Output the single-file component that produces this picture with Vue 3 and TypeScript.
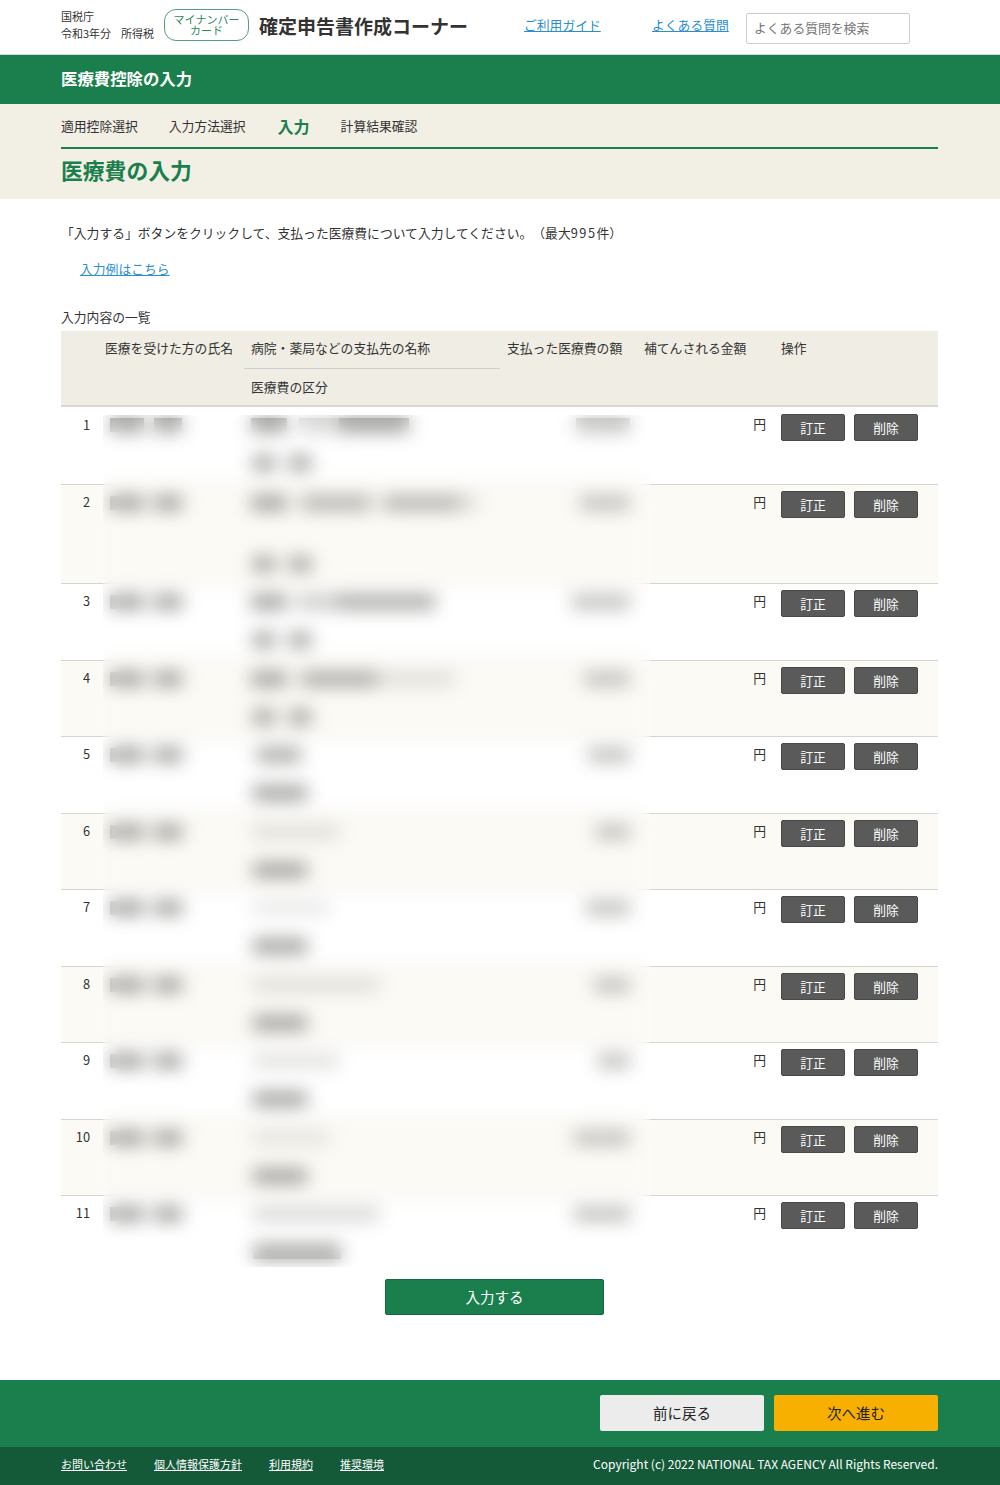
<template>
  <div class="page">
    <header class="top">
      <div class="wrap top-inner">
        <div class="year">
          <div>国税庁</div>
          <div>令和3年分<span class="tax">所得税</span></div>
        </div>
        <div class="badge">マイナンバー<br />カード</div>
        <div class="corner">確定申告書作成コーナー</div>
        <a class="guide">ご利用ガイド</a>
        <a class="faq">よくある質問</a>
        <input class="search" placeholder="よくある質問を検索" />
      </div>
    </header>

    <div class="band"><div class="wrap">医療費控除の入力</div></div>

    <div class="steps">
      <div class="wrap">
        <nav class="step-list">
          <span v-for="s in steps" :key="s" class="step" :class="{ active: s === '入力' }">{{ s }}</span>
        </nav>
        <h1 class="title">医療費の入力</h1>
      </div>
    </div>

    <main class="wrap main">
      <p class="lead">「入力する」ボタンをクリックして、支払った医療費について入力してください。（最大<span class="num">995</span>件）</p>
      <a class="example">入力例はこちら</a>
      <div class="list-label">入力内容の一覧</div>

      <div class="table">
        <div class="thead">
          <div></div>
          <div class="th">医療を受けた方の氏名</div>
          <div class="th-stack">
            <div class="th th-split">病院・薬局などの支払先の名称</div>
            <div class="th">医療費の区分</div>
          </div>
          <div class="th">支払った医療費の額</div>
          <div class="th">補てんされる金額</div>
          <div class="th">操作</div>
        </div>

        <div class="tbody">
          <div
            v-for="(r, i) in rows"
            :key="i"
            class="row"
            :class="{ even: i % 2 === 1, tall: r.tall, last: i === rows.length - 1 }"
          >
            <div class="no">{{ i + 1 }}</div>
            <div class="name">
              <span class="blob" :style="{ width: '34px' }"></span>
              <span class="blob" :style="{ width: '28px', marginLeft: '10px' }"></span>
            </div>
            <div class="payee">
              <div class="payee-top">
                <span
                  v-for="(b, j) in r.payee"
                  :key="j"
                  class="blob"
                  :style="{ width: b[0] + 'px', marginLeft: b[1] + 'px', opacity: b[2] }"
                ></span>
              </div>
              <div class="payee-sub">
                <span
                  v-for="(b, j) in r.sub"
                  :key="j"
                  class="blob"
                  :style="{ width: b[0] + 'px', marginLeft: b[1] + 'px' }"
                ></span>
              </div>
            </div>
            <div class="amount">
              <span class="blob light" :style="{ width: r.amount + 'px' }"></span>
            </div>
            <div class="yen">円</div>
            <div class="ops">
              <button class="op">訂正</button>
              <button class="op">削除</button>
            </div>
          </div>
          <div class="veil"></div>
        </div>
      </div>

      <div class="add-line"><button class="add">入力する</button></div>
    </main>

    <div class="nav-bar">
      <div class="wrap nav-inner">
        <button class="nav-btn back">前に戻る</button>
        <button class="nav-btn next">次へ進む</button>
      </div>
    </div>

    <footer class="foot">
      <div class="wrap foot-inner">
        <div class="foot-links">
          <a v-for="l in footLinks" :key="l">{{ l }}</a>
        </div>
        <div class="copy">Copyright (c) 2022 NATIONAL TAX AGENCY All Rights Reserved.</div>
      </div>
    </footer>
  </div>
</template>

<script setup lang="ts">
type Row = {
  payee: number[][]
  sub: number[][]
  amount: number
  tall?: boolean
}

const steps = ['適用控除選択', '入力方法選択', '入力', '計算結果確認']
const footLinks = ['お問い合わせ', '個人情報保護方針', '利用規約', '推奨環境']

const subA = [[22, 0], [22, 14]]
const subB = [[54, 0]]

// width, left gap, opacity of each blurred piece
const rows: Row[] = [
  { payee: [[36, 0, 1], [40, 12, 0.45], [70, 0, 1]], sub: subA, amount: 54 },
  { payee: [[36, 0, 1], [70, 14, 0.8], [76, 12, 0.8], [18, 0, 0.35]], sub: subA, amount: 50, tall: true },
  { payee: [[36, 0, 1], [40, 10, 0.55], [98, 0, 0.9]], sub: subA, amount: 58 },
  { payee: [[36, 0, 1], [76, 14, 0.9], [78, 0, 0.3]], sub: subA, amount: 46 },
  { payee: [[44, 6, 0.9]], sub: subB, amount: 42 },
  { payee: [[86, 2, 0.3]], sub: subB, amount: 34 },
  { payee: [[76, 2, 0.22]], sub: subB, amount: 44 },
  { payee: [[126, 2, 0.3]], sub: subB, amount: 36 },
  { payee: [[86, 2, 0.3]], sub: subB, amount: 32 },
  { payee: [[76, 2, 0.25]], sub: subB, amount: 56 },
  { payee: [[126, 2, 0.4]], sub: [[88, 0]], amount: 56 }
]
</script>

<style>
body {
  background: #fff;
}
</style>

<style scoped>
.page {
  width: 1000px;
  height: 1485px;
  overflow: hidden;
  font-family: "Noto Sans CJK JP", "Noto Sans", sans-serif;
  font-size: 12.8px;
  color: #333;
  text-spacing-trim: space-all;
  display: flex;
  flex-direction: column;
}

.wrap {
  width: 877px;
  margin-left: 61px;
}

.top {
  height: 55px;
  border-bottom: 1px solid #d8d8d8;
  box-sizing: border-box;
}

.top-inner {
  display: flex;
  align-items: flex-start;
}

.year {
  width: 103px;
  margin-top: 8px;
  font-size: 11px;
  line-height: 17px;
}

.tax {
  margin-left: 10px;
}

.badge {
  width: 85px;
  height: 32px;
  box-sizing: border-box;
  margin-top: 9px;
  border: 1px solid #53a07b;
  border-radius: 12px;
  color: #2b8a5c;
  font-size: 11px;
  line-height: 11px;
  text-align: center;
  padding-top: 4px;
}

.corner {
  margin: 12px 0 0 10px;
  width: 265px;
  font-size: 19px;
  line-height: 28px;
  font-weight: 700;
  white-space: nowrap;
}

.guide,
.faq {
  color: #2a8fd0;
  text-decoration: underline;
  margin-top: 15px;
  line-height: 19px;
}

.guide {
  width: 128px;
}

.faq {
  width: 94px;
}

.search {
  width: 164px;
  height: 31px;
  box-sizing: border-box;
  margin-top: 13px;
  border: 1px solid #ccc;
  border-radius: 2px;
  padding: 0 7px 2px;
  font: inherit;
}

.search::placeholder {
  color: #777;
}

.band {
  height: 49px;
  background: #1a7f4c;
  color: #fff;
  font-size: 16.4px;
  font-weight: 700;
  line-height: 47px;
}

.steps {
  height: 95px;
  background: #f2efe5;
}

.step-list {
  height: 45px;
  box-sizing: border-box;
  border-bottom: 2px solid #1a7f4c;
  display: flex;
  align-items: center;
  gap: 31px;
  padding-top: 1px;
}

.step {
  line-height: 20px;
}

.step.active {
  color: #1a7f4c;
  font-size: 16px;
  font-weight: 700;
  margin-left: 1px;
}

.title {
  margin: 0;
  padding-top: 5px;
  color: #1a7f4c;
  font-size: 21.8px;
  line-height: 32px;
  font-weight: 700;
}

.main {
  flex: 1;
}

.lead {
  margin: 0;
  padding-top: 24px;
  line-height: 20px;
}

.num {
  letter-spacing: 1.5px;
}

.example {
  display: block;
  margin: 16px 0 0 19px;
  line-height: 20px;
  color: #2a8fd0;
  text-decoration: underline;
}

.list-label {
  margin-top: 28px;
  line-height: 20px;
  height: 24px;
}

.thead {
  height: 76px;
  box-sizing: border-box;
  background: #f0eee4;
  border-bottom: 2px solid #d8d8d4;
  display: grid;
  grid-template-columns: 37px 146px 256px 137px 137px 164px;
}

.th {
  padding: 7px 7px 0;
  line-height: 20px;
  white-space: nowrap;
}

.th-split {
  height: 38px;
  box-sizing: border-box;
  border-bottom: 1px solid #cfd0cc;
}

.th-split + .th {
  padding-top: 8px;
}

.tbody {
  position: relative;
}

.row {
  height: 77px;
  box-sizing: border-box;
  border-top: 1px solid #d5d5d0;
  display: grid;
  grid-template-columns: 42px 141px 256px 150px 123px 165px;
}

.row:first-child {
  border-top: 0;
}

.row.even {
  height: 76px;
  background: #fcfaf4;
}

.row.tall {
  height: 99px;
}

.row.last {
  height: 72px;
}

.no {
  padding: 7px 13px 0 0;
  text-align: right;
  line-height: 20px;
}

.row:first-child .no {
  padding-top: 8px;
}

.name {
  display: flex;
  padding: 11px 0 0 7px;
}

.payee {
  padding-left: 7px;
  display: flex;
  flex-direction: column;
}

.payee-top {
  display: flex;
  padding-top: 11px;
  height: 38px;
  box-sizing: border-box;
}

.tall .payee-top {
  height: 61px;
}

.payee-sub {
  display: flex;
  padding: 11px 0 0 2px;
}

.amount {
  display: flex;
  justify-content: flex-end;
  padding: 11px 20px 0 0;
}

.blob {
  display: block;
  height: 14px;
  background: #989896;
  flex: none;
}

.blob.light {
  background: #bcbcba;
}

.veil {
  position: absolute;
  left: 42px;
  width: 547px;
  top: 8px;
  bottom: 0;
  backdrop-filter: blur(9px);
}

.yen {
  padding: 7px 7px 0 0;
  text-align: right;
  line-height: 20px;
}

.ops {
  display: flex;
  align-items: flex-start;
  gap: 9px;
  padding: 6px 0 0 8px;
}

.row:first-child .ops {
  padding-top: 7px;
}

.op {
  width: 64px;
  height: 27px;
  border: 1px solid #484848;
  border-radius: 2px;
  background: #5a5a5a;
  color: #fff;
  font: inherit;
  line-height: 25px;
  padding: 0;
}

.add-line {
  width: 868px;
  display: flex;
  justify-content: center;
  padding-top: 12px;
}

.add {
  width: 219px;
  height: 36px;
  margin-left: -1px;
  border: 1px solid #126b3e;
  border-radius: 2px;
  background: #1a7f4c;
  color: #fff;
  font: inherit;
  font-size: 14.5px;
  padding: 0 0 2px;
}

.nav-bar {
  height: 67px;
  background: #1a7f4c;
}

.nav-inner {
  display: flex;
  justify-content: flex-end;
  gap: 10px;
  padding-top: 15px;
}

.nav-btn {
  width: 164px;
  height: 36px;
  border: 0;
  border-radius: 2px;
  color: #222;
  font: inherit;
  font-size: 14.5px;
  padding: 0 0 2px;
}

.back {
  background: #ececec;
}

.next {
  background: #f8b000;
}

.foot {
  height: 38px;
  background: #145a38;
  color: #fff;
}

.foot-inner {
  height: 100%;
  box-sizing: border-box;
  padding-bottom: 5px;
  display: flex;
  justify-content: space-between;
  align-items: center;
}

.foot-links {
  display: flex;
  gap: 27px;
  font-size: 11px;
}

.foot-links a {
  text-decoration: underline;
}

.copy {
  font-size: 12px;
  white-space: nowrap;
}
</style>
